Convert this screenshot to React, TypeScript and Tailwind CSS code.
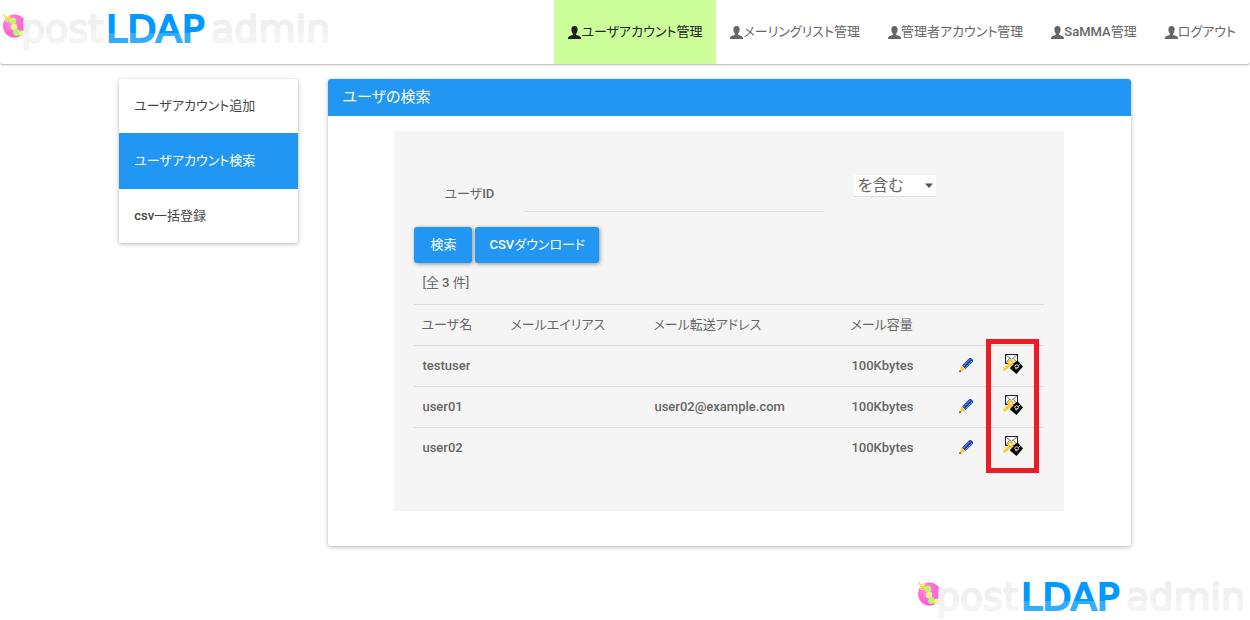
import { useState } from 'react';
import type { ReactNode } from 'react';
import clsx from 'clsx';

type User = {
  name: string;
  alias: string;
  forward: string;
  quota: string;
};

type Item = {
  latin?: string;
  label: string;
};

const navItems: Item[] = [
  { label: 'ユーザアカウント管理' },
  { label: 'メーリングリスト管理' },
  { label: '管理者アカウント管理' },
  { latin: 'SaMMA', label: '管理' },
  { label: 'ログアウト' },
];

const sideItems: Item[] = [
  { label: 'ユーザアカウント追加' },
  { label: 'ユーザアカウント検索' },
  { latin: 'csv', label: '一括登録' },
];

const users: User[] = [
  { name: 'testuser', alias: '', forward: '', quota: '100Kbytes' },
  { name: 'user01', alias: '', forward: 'user02@example.com', quota: '100Kbytes' },
  { name: 'user02', alias: '', forward: '', quota: '100Kbytes' },
];

function Logo({ id }: { id: string }) {
  const blue = `url(#${id}-blue)`;
  const gray = `url(#${id}-gray)`;

  return (
    <svg width="335" height="52" viewBox="0 0 335 52" role="img" aria-label="postLDAPadmin" className="block shrink-0">
      <defs>
        <linearGradient id={`${id}-blue`} gradientUnits="userSpaceOnUse" x1="0" y1="0" x2="0" y2="52">
          <stop offset="0.635" stopColor="#0099ff" />
          <stop offset="0.635" stopColor="#33adff" />
        </linearGradient>
        <linearGradient id={`${id}-gray`} gradientUnits="userSpaceOnUse" x1="0" y1="0" x2="0" y2="52">
          <stop offset="0.635" stopColor="#f0f0f0" />
          <stop offset="0.635" stopColor="#f4f4f4" />
        </linearGradient>
        <radialGradient id={`${id}-pink`} cx="0.35" cy="0.35" r="0.7">
          <stop offset="0" stopColor="#ff8de0" />
          <stop offset="1" stopColor="#ff55cf" />
        </radialGradient>
      </defs>
      <circle cx="14.5" cy="26" r="11.5" fill={`url(#${id}-pink)`} />
      <circle cx="13" cy="21" r="3.2" fill="#c2f56c" />
      <circle cx="14" cy="27" r="3.2" fill="#f4f58a" />
      <circle cx="16.5" cy="32.5" r="3.4" fill="#b4f478" />
      <circle cx="22" cy="33.5" r="3" fill="#f4f58a" />
      <path d="M3.5 14.5L6 17.5M11 14.5L9 17.5" stroke="#f0d060" strokeWidth="1.5" fill="none" />
      <circle cx="7.5" cy="19" r="3" fill="#f9e878" />
      <path d="M6 18v1M9 18v1M6 20q1.5 1.2 3 0" stroke="#d8a040" strokeWidth="0.8" fill="none" />
      <g fontFamily="'DejaVu Sans', sans-serif" fontSize="38" fontWeight="400">
        <text x="21" y="42" fill={gray} stroke={gray} strokeWidth="2">
          post
        </text>
        <text x="106" y="42" fill={blue} stroke={blue} strokeWidth="2">
          LDAP
        </text>
        <text x="211" y="42" fill={gray} stroke={gray} strokeWidth="2">
          admin
        </text>
      </g>
    </svg>
  );
}

function UserIcon() {
  return (
    <svg width="13" height="13" viewBox="0 0 13 13" fill="currentColor" aria-hidden="true" className="shrink-0">
      <path d="M6.5 0C4.3 0 3.2 1.5 3.4 3.8C3.5 5.6 4.1 7 4.9 7.7V8.7C4.2 9.7 0 9.6 0 12V13H13V12C13 9.6 8.8 9.7 8.1 8.7V7.7C8.9 7 9.5 5.6 9.6 3.8C9.8 1.5 8.7 0 6.5 0Z" />
    </svg>
  );
}

function PencilIcon() {
  return (
    <svg width="16" height="16" viewBox="0 0 16 16" aria-hidden="true" className="block">
      <path d="M4 8.5L11.5 1H13L15 3V4.5L7.5 12Z" fill="#1645a8" />
      <path d="M5.5 9L12.5 2M7.5 10.5L14 4" stroke="#b5c8ee" strokeWidth="0.9" strokeDasharray="1.8 0.7" />
      <path d="M3.5 8.5L7.5 12.5L5.5 13.5L2 14L2.5 11Z" fill="#fbc94a" />
      <path d="M1 15.2L1.8 12.8L3.5 14.4Z" fill="#4a4a4a" />
    </svg>
  );
}

function MailKeyIcon() {
  return (
    <svg width="20" height="20" viewBox="0 0 20 20" aria-hidden="true" className="block">
      <rect x="2.5" y="0.5" width="12" height="9" fill="#fff" stroke="#222" />
      <path d="M2.5 0.5L8.500 5.5L14.5 0.5M2.5 9.5L6.5 4.5M14.5 9.5L10.5 4.5" fill="none" stroke="#444" strokeWidth="0.8" />
      <path d="M14.5 6.5L20 12.5L13.5 20L7 14.5L9 10.5Z" fill="#000" />
      <ellipse cx="13.8" cy="12.3" rx="2" ry="1.5" fill="none" stroke="#fff" strokeWidth="0.9" />
      <path d="M12 14.8h2.5M16 10l1 1" stroke="#fff" strokeWidth="0.8" />
      <path d="M5 6.5L8.5 5L10.5 7V10.5L8.5 12.5H6.5L1.5 17L0 16L4.5 11Z" fill="#ffc92e" />
      <path d="M0.5 13.5l2.5 2.5M2.5 11.5l2.5 3" stroke="#ffc92e" strokeWidth="1.2" />
      <circle cx="7.5" cy="8.5" r="1.1" fill="#fff" />
    </svg>
  );
}

function HeadCell({ children }: { children?: ReactNode }) {
  return <th className="border-t border-[#dddddd] pr-2 pl-[7px] text-left font-normal">{children}</th>;
}

export default function App() {
  const [userId, setUserId] = useState('');
  const [active, setActive] = useState(1);

  return (
    <div className="bg-white font-['Roboto','Noto_Sans_CJK_JP',sans-serif] text-[13px] leading-5 text-[#666666] [font-feature-settings:'palt']">
      <header className="flex h-16 justify-between rounded-b-[3px] bg-white shadow-[0_1px_2px_rgba(0,0,0,0.3)]">
        <a href="#top">
          <Logo id="top" />
        </a>
        <nav className="flex">
          {navItems.map((item, i) => (
            <a
              key={item.label}
              href="#nav"
              className={clsx('flex items-center px-[14px] whitespace-nowrap', i === 0 && 'bg-[#ccff99] text-[#212121]')}
            >
              <UserIcon />
              {item.latin && <span className="font-medium">{item.latin}</span>}
              {item.label}
            </a>
          ))}
        </nav>
      </header>

      <div className="mx-auto flex w-5/6 items-start pt-[15px]">
        <aside className="w-1/5 px-[15px]">
          <ul className="overflow-hidden rounded-[2px] bg-white shadow-[0_1px_4px_rgba(0,0,0,0.3)]">
            {sideItems.map((item, i) => (
              <li key={item.label}>
                <a
                  href="#side"
                  onClick={() => setActive(i)}
                  className={clsx(
                    'flex items-center px-[15px]',
                    i === active ? 'h-14 bg-[#2196f3] text-white' : 'h-[54px] text-[#444444]'
                  )}
                >
                  {item.latin && <span className="font-medium">{item.latin}</span>}
                  {item.label}
                </a>
              </li>
            ))}
          </ul>
        </aside>

        <main className="w-4/5 px-[15px]">
          <section className="overflow-hidden rounded-[3px] bg-white pb-[35px] shadow-[0_1px_4px_rgba(0,0,0,0.3)]">
            <h1 className="bg-[#2196f3] px-[15px] py-2 text-[15px] leading-[21px] font-normal text-white">ユーザの検索</h1>

            <div className="relative mx-auto mt-[15px] w-5/6 bg-[#f5f5f5] px-5 pt-11 pb-[43px]">
              <form onSubmit={(e) => e.preventDefault()}>
                <div className="flex items-start">
                  <label htmlFor="user-id" className="w-[110px] pl-[30px] leading-[37px]">
                    ユーザ<span className="font-medium">ID</span>
                  </label>
                  <input
                    id="user-id"
                    type="text"
                    value={userId}
                    onChange={(e) => setUserId(e.target.value)}
                    className="h-[37px] w-[300px] border-b border-[#dddddd] bg-transparent text-base outline-none"
                  />
                  <div className="relative ml-[30px]">
                    <select
                      aria-label="検索条件"
                      className="h-[22px] w-[82px] appearance-none border-b border-[#dddddd] bg-white pl-[3px] text-base leading-5 outline-none"
                    >
                      <option>を含む</option>
                      <option>に一致する</option>
                    </select>
                    <svg width="8" height="5" viewBox="0 0 8 5" aria-hidden="true" className="pointer-events-none absolute top-2 right-[3px]">
                      <path d="M0 0.5H8L4 5Z" fill="#555555" />
                    </svg>
                  </div>
                </div>
                <div className="mt-[15px] flex gap-[3px] text-white">
                  <button type="submit" className="h-9 rounded-[3px] bg-[#2196f3] px-4 shadow-[1px_1px_4px_rgba(0,0,0,0.4)]">
                    検索
                  </button>
                  <button type="button" className="h-9 rounded-[3px] bg-[#2196f3] px-[14px] shadow-[1px_1px_4px_rgba(0,0,0,0.4)]">
                    <span className="font-medium">CSV</span>ダウンロード
                  </button>
                </div>
              </form>

              <table className="w-full table-fixed">
                <colgroup>
                  <col className="w-[89px]" />
                  <col className="w-[143px]" />
                  <col className="w-[197px]" />
                  <col className="w-[107px]" />
                  <col className="w-[45px]" />
                  <col />
                </colgroup>
                <thead>
                  <tr className="h-[41px]">
                    <td className="px-2" colSpan={6}>
                      [全 <span className="font-medium">3</span> 件]
                    </td>
                  </tr>
                  <tr className="h-[41px]">
                    <HeadCell>ユーザ名</HeadCell>
                    <HeadCell>メールエイリアス</HeadCell>
                    <HeadCell>メール転送アドレス</HeadCell>
                    <HeadCell>メール容量</HeadCell>
                    <HeadCell />
                    <HeadCell />
                  </tr>
                </thead>
                <tbody className="font-medium">
                  {users.map((user) => (
                    <tr key={user.name} className="h-[41px] border-t border-[#dddddd]">
                      <td className="px-2">{user.name}</td>
                      <td className="px-2">{user.alias}</td>
                      <td className="px-2">{user.forward}</td>
                      <td className="px-2">{user.quota}</td>
                      <td className="px-2 pb-0.5">
                        <button type="button" aria-label={`${user.name}を編集`} className="block">
                          <PencilIcon />
                        </button>
                      </td>
                      <td className="px-2 pb-1">
                        <button type="button" aria-label={`${user.name}の転送設定`} className="block">
                          <MailKeyIcon />
                        </button>
                      </td>
                    </tr>
                  ))}
                </tbody>
              </table>

              <div className="pointer-events-none absolute right-[25px] bottom-[38px] h-[134px] w-[53px] border-[5px] border-[#ed1c24]" />
            </div>
          </section>
        </main>
      </div>

      <footer className="flex justify-end pt-[22px]">
        <Logo id="bottom" />
      </footer>
    </div>
  );
}
